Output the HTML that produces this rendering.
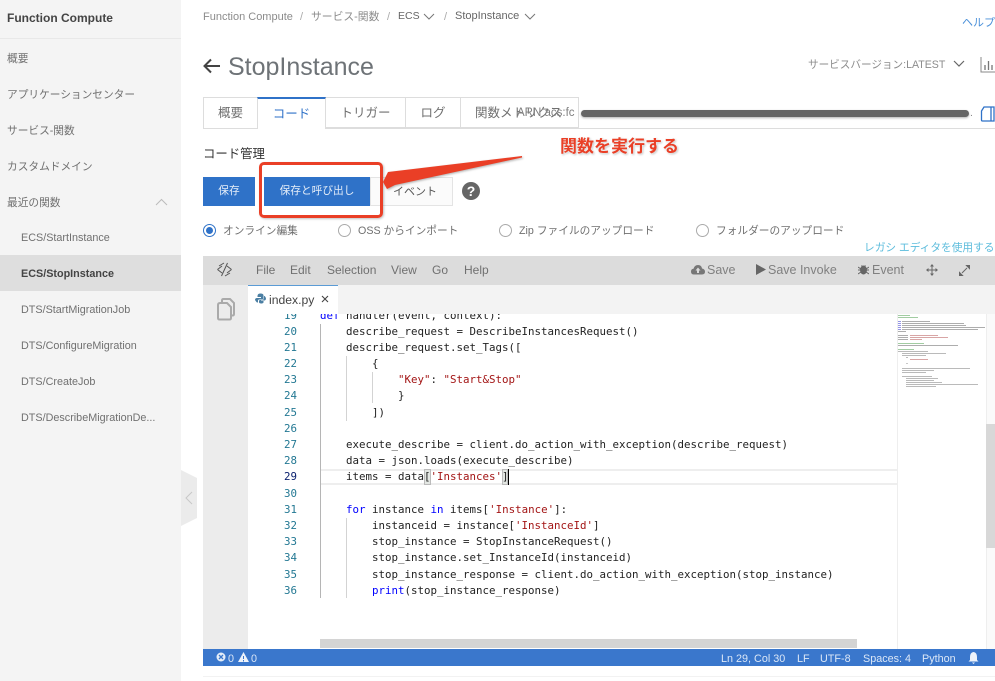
<!DOCTYPE html>
<html lang="ja"><head><meta charset="utf-8"><style>
html,body{margin:0;padding:0;background:#fff}
body{width:995px;height:681px;overflow:hidden;position:relative;font-family:"Liberation Sans","Noto Sans CJK JP",sans-serif;color:#707070}
.t{position:absolute;white-space:nowrap;line-height:16px;font-size:10.7px}
.si{font-size:10.8px}
.b{position:absolute}
.ln{position:absolute;left:270px;width:27px;text-align:right;font:10.8px/16px "DejaVu Sans Mono",monospace;color:#237893}
.c{position:absolute;white-space:pre;font:10.8px/16px "DejaVu Sans Mono",monospace;color:#222}
.k{color:#0000ff}.s{color:#a31515}
.g{position:absolute;width:1px;background:#d3d3d3}
.tab{position:absolute;top:97px;height:31px;box-sizing:border-box;border:1px solid #ddd;border-left:0;text-align:center;line-height:30px;font-size:12.5px;color:#707070;background:#fff}
.r{position:absolute;top:224px;width:11px;height:11px;border:1px solid #aaa;border-radius:50%;background:#fff}
.tb{position:absolute;top:262px;line-height:16px;font-size:12px;color:#707070;white-space:nowrap}
.tr{position:absolute;top:262px;line-height:16px;font-size:12.5px;color:#808080;white-space:nowrap}
.st{position:absolute;top:651px;line-height:16px;font-size:10.8px;color:#dbe7f7;white-space:nowrap}
</style></head><body>
<div class="b" style="left:0;top:0;width:181px;height:681px;background:#f4f4f4"></div>
<div class="b" style="left:0;top:38px;width:181px;height:1px;background:#e8e8e8"></div>
<div class="t" style="left:7px;top:10px;font-size:12px;font-weight:bold;color:#444">Function Compute</div>
<div class="t" style="left:7px;top:51px">概要</div>
<div class="t" style="left:7px;top:87px">アプリケーションセンター</div>
<div class="t" style="left:7px;top:123px">サービス-関数</div>
<div class="t" style="left:7px;top:159px">カスタムドメイン</div>
<div class="t" style="left:7px;top:195px">最近の関数</div>
<svg class="b" style="left:155px;top:198px" width="13" height="8"><path d="M1 7L6.500 1.500L12 7" fill="none" stroke="#bbb" stroke-width="1"/></svg>
<div class="t si" style="left:21px;top:230px">ECS/StartInstance</div>
<div class="b" style="left:0;top:255px;width:181px;height:36px;background:#dedede"></div>
<div class="t si" style="left:21px;top:266px;font-weight:bold;color:#444">ECS/StopInstance</div>
<div class="t si" style="left:21px;top:302px">DTS/StartMigrationJob</div>
<div class="t si" style="left:21px;top:338px">DTS/ConfigureMigration</div>
<div class="t si" style="left:21px;top:374px">DTS/CreateJob</div>
<div class="t si" style="left:21px;top:410px">DTS/DescribeMigrationDe...</div>
<svg class="b" style="left:181px;top:470px" width="16" height="56"><path d="M0 0L16 8V48L0 56Z" fill="#ebebeb"/><path d="M11 22L5 28L11 34" fill="none" stroke="#c8c8c8"/></svg>

<div class="t" style="left:203px;top:9px;font-size:11px;color:#8c8c8c">Function Compute</div>
<div class="t" style="left:300px;top:9px;font-size:11px;color:#aaa">/</div>
<div class="t" style="left:311px;top:9px;font-size:10.800px;color:#8c8c8c">サービス-関数</div>
<div class="t" style="left:387px;top:9px;font-size:11px;color:#aaa">/</div>
<div class="t" style="left:398px;top:8px;font-size:10.500px;color:#666">ECS</div>
<svg class="b" style="left:423px;top:13px" width="12" height="7"><path d="M1 1L6 6L11 1" fill="none" stroke="#777"/></svg>
<div class="t" style="left:444px;top:9px;font-size:11px;color:#aaa">/</div>
<div class="t" style="left:455px;top:8px;font-size:11px;color:#666">StopInstance</div>
<svg class="b" style="left:524px;top:13px" width="12" height="7"><path d="M1 1L6 6L11 1" fill="none" stroke="#777"/></svg>
<div class="t" style="left:962px;top:15px;font-size:11px;color:#4a90d9">ヘルプ</div>

<svg class="b" style="left:202px;top:57px" width="19" height="18"><path d="M18 9H3M9 2.500L2.500 9L9 15.500" fill="none" stroke="#444" stroke-width="2"/></svg>
<div class="t" style="left:228px;top:53px;font-size:25px;line-height:28px;color:#6e7377">StopInstance</div>
<div class="t" style="left:808px;top:57px;font-size:10.600px;color:#8c8c8c">サービスバージョン:LATEST</div>
<svg class="b" style="left:953px;top:60px" width="12" height="8"><path d="M1 1L6 6L11 1" fill="none" stroke="#666" stroke-width="1.200"/></svg>
<svg class="b" style="left:980px;top:57px" width="15" height="16"><path d="M1 0V15H15" fill="none" stroke="#888"/><path d="M5 8V13M8.500 4V13M12 8V13" stroke="#777" stroke-width="1.300"/></svg>

<div class="b" style="left:203px;top:128px;width:792px;height:1px;background:#ddd"></div>
<div class="b" style="left:203px;top:97px;width:55px;height:32px;box-sizing:border-box;border:1px solid #ddd;text-align:center;line-height:30px;font-size:12.500px">概要</div>
<div class="b" style="left:257px;top:97px;width:69px;height:32px;box-sizing:border-box;border:1px solid #ddd;border-top:2px solid #2f72c8;border-bottom:0;background:#fff;text-align:center;line-height:30px;font-size:12.500px;color:#2f72c8">コード</div>
<div class="tab" style="left:326px;width:80px">トリガー</div>
<div class="tab" style="left:406px;width:55px">ログ</div>
<div class="tab" style="left:461px;width:118px;text-align:left;padding-left:14px">関数メトリクス</div>
<div class="t" style="left:517px;top:105px;font-size:11.500px;color:#808080">ARN acs:fc</div>
<div class="b" style="left:581px;top:110px;width:388px;height:7px;border-radius:4px;background:#666;box-shadow:0 1px 2px rgba(0,0,0,.3)"></div>
<div class="t" style="left:970px;top:105px;font-size:10.500px;color:#888">.</div>
<svg class="b" style="left:980px;top:106px" width="15" height="16"><path d="M1.500 5L4 1H14V15H2.500Q1.500 15 1.500 14ZM11 1V15" fill="none" stroke="#2f72c8" stroke-width="1.300"/></svg>

<div class="t" style="left:203px;top:146px;font-size:12.400px;color:#333">コード管理</div>
<div class="t" style="left:560px;top:137px;font-size:17px;line-height:20px;font-weight:bold;color:#ea3f26;text-shadow:0 0 2px #fff,1px 1px 2px rgba(0,0,0,.3)">関数を実行する</div>

<div class="b" style="left:203px;top:177px;width:52px;height:29px;background:#2f72c8;color:#e4edf8;text-align:center;line-height:29px;font-size:10.700px">保存</div>
<div class="b" style="left:264px;top:177px;width:106px;height:29px;background:#2f72c8;color:#e4edf8;text-align:center;line-height:29px;font-size:10.700px">保存と呼び出し</div>
<div class="b" style="left:370px;top:177px;width:83px;height:29px;box-sizing:border-box;border:1px solid #e4e4e4;background:#fbfbfb;color:#555;line-height:29px;font-size:11px;padding-left:22px">イベント</div>
<div class="b" style="left:462px;top:182px;width:18px;height:18px;border-radius:50%;background:#666;color:#fff;text-align:center;font-size:14px;font-weight:bold;line-height:18px">?</div>
<div class="b" style="left:259px;top:162px;width:118px;height:50px;border:3px solid #ea3f26;border-radius:5px;box-shadow:1px 1px 2px rgba(0,0,0,.25)"></div>
<svg class="b" style="left:376px;top:152px" width="150" height="40"><path d="M146 4L12 20L7 30L11 37L19 33L146 5.500Z" fill="#ea3f26" style="filter:drop-shadow(1px 1px 1px rgba(0,0,0,.3))"/></svg>

<div class="b" style="left:203px;top:224px;width:11px;height:11px;border:1px solid #2f72c8;border-radius:50%;background:#fff"></div>
<div class="b" style="left:206px;top:227px;width:7px;height:7px;border-radius:50%;background:#2f72c8"></div>
<div class="t" style="left:223px;top:222.500px">オンライン編集</div>
<div class="r" style="left:338px"></div>
<div class="t" style="left:358px;top:222.500px">OSS からインポート</div>
<div class="r" style="left:499px"></div>
<div class="t" style="left:519px;top:222.500px">Zip ファイルのアップロード</div>
<div class="r" style="left:696px"></div>
<div class="t" style="left:716px;top:222.500px">フォルダーのアップロード</div>
<div class="t" style="left:864px;top:240px;color:#5cbcdc">レガシ エディタを使用する</div>

<div class="b" style="left:203px;top:256px;width:792px;height:29px;background:#dcdcdc"></div>
<div class="b" style="left:203px;top:285px;width:45px;height:364px;background:#ececec"></div>
<div class="b" style="left:248px;top:285px;width:747px;height:29px;background:#f3f3f3"></div>
<div class="b" style="left:248px;top:285px;width:90px;height:29px;background:#fff;border-top:1px solid #5b9bd5;box-sizing:border-box"></div>
<svg class="b" style="left:216px;top:262px" width="17" height="15"><path d="M1.500 7.500L6 4M1.500 7.500L6 11M15.500 7.500L11 4M15.500 7.500L11 11M5.500 14L11.500 1M3 4L8 1M14 11L9 14" fill="none" stroke="#555" stroke-width="1"/></svg>
<div class="tb" style="left:256px">File</div><div class="tb" style="left:290px">Edit</div><div class="tb" style="left:327px">Selection</div><div class="tb" style="left:391px">View</div><div class="tb" style="left:432px">Go</div><div class="tb" style="left:464px">Help</div>
<svg class="b" style="left:691px;top:264px" width="14" height="11"><path d="M3 10.500Q0 10.500 0 7.500Q0 5 2.500 4.800Q3.500 1 7 1Q10.500 1 11 4.500Q14 5 14 7.800Q14 10.500 11 10.500Z" fill="#777"/><path d="M7 3.500L4.500 6.500H6V9H8V6.500H9.500Z" fill="#dcdcdc"/></svg>
<div class="tr" style="left:707px">Save</div>
<svg class="b" style="left:756px;top:264px" width="10" height="11"><path d="M0 0L10 5.500L0 11Z" fill="#666"/></svg>
<div class="tr" style="left:768px">Save Invoke</div>
<svg class="b" style="left:858px;top:264px" width="11" height="11"><ellipse cx="5.500" cy="6" rx="3.500" ry="4.500" fill="#666"/><path d="M0 3L3 5M11 3L8 5M0 6H2M9 6H11M0 10L3 8M11 10L8 8M3.500 1.500L5 3M7.500 1.500L6 3" stroke="#666"/></svg>
<div class="tr" style="left:872px">Event</div>
<svg class="b" style="left:926px;top:264px" width="12" height="12"><path d="M6 0L8 2.500H4ZM6 12L4 9.500H8ZM0 6L2.500 4V8ZM12 6L9.500 8V4ZM5.500 2H6.500V10H5.500ZM2 5.500H10V6.500H2Z" fill="#666"/></svg>
<svg class="b" style="left:959px;top:265px" width="11" height="11"><path d="M7 0H11V4ZM0 7V11H4ZM3 8L8 3" fill="#666" stroke="#666"/></svg>
<svg class="b" style="left:215px;top:297px" width="21" height="24"><path d="M3 8Q3 6 5 6H12L16 10V21Q16 22.500 14.500 22.500H4.500Q3 22.500 3 21Z" fill="none" stroke="#aaa" stroke-width="2"/><path d="M7 5V3.500Q7 2 8.500 2H15L19 6V17Q19 18.500 17.500 18.500H16.500" fill="none" stroke="#aaa" stroke-width="2"/></svg>
<svg class="b" style="left:255px;top:293px" width="11" height="11"><path d="M5.500 0.500Q2.500 0.500 2.500 3V4H6V5H1.500Q0 5.500 0 6.500T2 9.500H3V7.500Q3 6.500 4.500 6.500H7Q8.500 6.500 8.500 5V2.500Q8.500 0.500 5.500 0.500Z" fill="#4b7fa3"/><path d="M9 3V4.500Q9 7 7 7H5Q4 7 4 8V9.500Q4.500 10.500 6 10.500Q8 10.500 8.500 9.500V8H6V7.500H9.500Q11 7 11 5.500T9.500 3Z" fill="#4b7fa3"/></svg>
<div class="t" style="left:269px;top:292px;font-size:12.200px;color:#444">index.py</div>
<svg class="b" style="left:321px;top:295px" width="8" height="8"><path d="M1 1L7 7M7 1L1 7" stroke="#444" stroke-width="1.100"/></svg>

<div class="b" style="left:248px;top:314px;width:650px;height:335px;overflow:hidden;background:#fff">
<div class="ln" style="left:22px;top:-6px">19</div>
<div class="c" style="left:72px;top:-6px"><span class="k">def</span> handler(event, context):</div>
</div>
<div class="g" style="left:320px;top:324px;height:274px;background:#b5b5b5"></div>
<div class="g" style="left:346px;top:356px;height:65px"></div>
<div class="g" style="left:372px;top:372px;height:31px"></div>
<div class="g" style="left:346px;top:518px;height:80px"></div>

<div class="ln" style="top:324px">20</div><div class="c" style="left:346px;top:324px">describe_request = DescribeInstancesRequest()</div>
<div class="ln" style="top:340px">21</div><div class="c" style="left:346px;top:340px">describe_request.set_Tags([</div>
<div class="ln" style="top:356px">22</div><div class="c" style="left:372px;top:356px">{</div>
<div class="ln" style="top:372px">23</div><div class="c" style="left:398px;top:372px"><span class="s">"Key"</span>: <span class="s">"Start&amp;Stop"</span></div>
<div class="ln" style="top:388px">24</div><div class="c" style="left:398px;top:388px">}</div>
<div class="ln" style="top:405px">25</div><div class="c" style="left:372px;top:405px">])</div>
<div class="ln" style="top:421px">26</div>
<div class="ln" style="top:437px">27</div><div class="c" style="left:346px;top:437px">execute_describe = client.do_action_with_exception(describe_request)</div>
<div class="ln" style="top:453px">28</div><div class="c" style="left:346px;top:453px">data = json.loads(execute_describe)</div>
<div class="b" style="left:321px;top:469px;width:577px;height:16px;border-top:2px solid #eee;border-bottom:2px solid #eee;box-sizing:border-box"></div>
<div class="b" style="left:424px;top:469px;width:7px;height:16px;background:#e2e6e2;box-sizing:border-box;border:1px solid #bbb"></div>
<div class="b" style="left:502px;top:469px;width:6px;height:16px;background:#e2e6e2;box-sizing:border-box;border:1px solid #bbb"></div>
<div class="b" style="left:508px;top:469px;width:1px;height:16px;background:#000"></div>
<div class="ln" style="top:469px;color:#0b216f">29</div><div class="c" style="left:346px;top:469px">items = data[<span class="s">'Instances'</span>]</div>
<div class="ln" style="top:486px">30</div>
<div class="ln" style="top:502px">31</div><div class="c" style="left:346px;top:502px"><span class="k">for</span> instance <span class="k">in</span> items[<span class="s">'Instance'</span>]:</div>
<div class="ln" style="top:518px">32</div><div class="c" style="left:372px;top:518px">instanceid = instance[<span class="s">'InstanceId'</span>]</div>
<div class="ln" style="top:534px">33</div><div class="c" style="left:372px;top:534px">stop_instance = StopInstanceRequest()</div>
<div class="ln" style="top:550px">34</div><div class="c" style="left:372px;top:550px">stop_instance.set_InstanceId(instanceid)</div>
<div class="ln" style="top:567px">35</div><div class="c" style="left:372px;top:567px">stop_instance_response = client.do_action_with_exception(stop_instance)</div>
<div class="ln" style="top:583px">36</div><div class="c" style="left:372px;top:583px"><span class="k">print</span>(stop_instance_response)</div>

<div class="b" style="left:320px;top:639px;width:537px;height:9px;background:#d4d4d4"></div>
<div class="b" style="left:897px;top:314px;width:1px;height:335px;background:#eee"></div>
<div class="b" style="left:986px;top:314px;width:9px;height:335px;background:#fafafa;border-left:1px solid #eee;box-sizing:border-box"></div>
<div class="b" style="left:986px;top:424px;width:9px;height:124px;background:#d8d8d8"></div>
<svg class="b" style="left:898px;top:314px;opacity:.8" width="88" height="135">
<g stroke-width="1" fill="none">
<path d="M0 1.500H12M0 3.500H20" stroke="#8cc08c"/>
<path d="M0 7.500H3M0 9.500H3M0 11.500H3M0 13.500H3M0 15.500H3" stroke="#7a7ae0"/>
<path d="M4 7.500H32M4 9.500H66M4 11.500H68M4 13.500H87M4 15.500H80M0 17.500H8" stroke="#999"/>
<path d="M0 21.500H10M0 23.500H10M0 25.500H10" stroke="#999"/><path d="M12 21.500H40M12 23.500H50M12 25.500H24" stroke="#cf8f8f"/>
<path d="M0 29.500H26" stroke="#8cc08c"/><path d="M0 31.500H60" stroke="#999"/>
<path d="M0 35.500H16" stroke="#8cc08c"/><path d="M0 37.500H30M4 39.500H48M4 41.500H28M8 43.500H10" stroke="#aaa"/>
<path d="M12 45.500H30" stroke="#cf8f8f"/><path d="M8 49.500H10" stroke="#bbb"/>
<path d="M4 54.500H72M4 56.500H36M4 58.500H28" stroke="#aaa"/>
<path d="M4 62.500H34M8 64.500H40M8 66.500H36M8 68.500H44M8 70.500H80M8 72.500H38" stroke="#aaa"/>
</g></svg>

<div class="b" style="left:203px;top:649px;width:792px;height:17px;background:#3a77cc"></div>
<svg class="b" style="left:216px;top:652px" width="11" height="11"><circle cx="5" cy="5" r="4.500" fill="#e4edf8"/><path d="M3 3L7 7M7 3L3 7" stroke="#3a77cc" stroke-width="1.300"/></svg>
<div class="st" style="left:228px">0</div>
<svg class="b" style="left:238px;top:652px" width="11" height="11"><path d="M5.500 0L11 10H0Z" fill="#eef3fa"/><path d="M5.500 4V7M5.500 8V9.500" stroke="#3a77cc"/></svg>
<div class="st" style="left:251px">0</div>
<div class="st" style="left:721px">Ln 29, Col 30</div>
<div class="st" style="left:797px">LF</div>
<div class="st" style="left:820px">UTF-8</div>
<div class="st" style="left:863px">Spaces: 4</div>
<div class="st" style="left:922px">Python</div>
<svg class="b" style="left:968px;top:652px" width="11" height="12"><path d="M5.500 0Q9 0.500 9 5V8L10.500 9.500H0.500L2 8V5Q2 0.500 5.500 0ZM4 10.500H7L5.500 12Z" fill="#eef3fa"/></svg>
<div class="b" style="left:203px;top:676px;width:792px;height:1px;background:#f2f2f2"></div>
</body></html>
